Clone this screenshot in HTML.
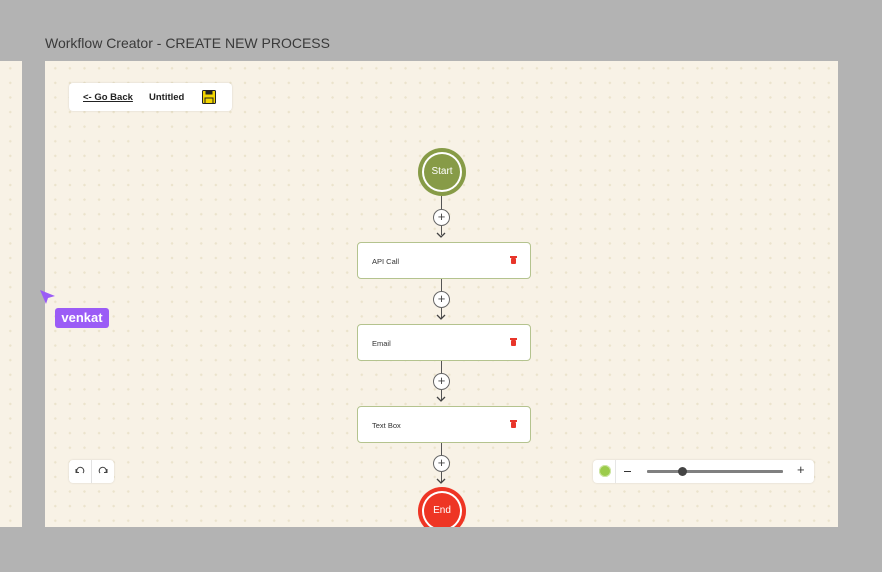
<!DOCTYPE html>
<html><head><style>
*{margin:0;padding:0;box-sizing:border-box}
body{width:882px;height:572px;background:#b3b3b3;position:relative;overflow:hidden;font-family:"Liberation Sans",sans-serif}
.title{position:absolute;left:45px;top:35px;font-size:14px;color:#3a3a3a}
.bg{background-color:#f8f2e6;background-image:radial-gradient(circle,#ebe3cc 1.1px,transparent 1.4px);background-size:14.6px 14.6px;background-position:3px 0px}
.strip{position:absolute;left:0;top:61px;width:22px;height:466px}
.canvas{position:absolute;left:45px;top:61px;width:793px;height:466px;overflow:hidden}
.panel{position:absolute;background:#fff;border-radius:4px;box-shadow:0 0 2px rgba(0,0,0,.12)}
.line{position:absolute;left:395.5px;width:1.5px;background:#555}
.plus{position:absolute;left:388px;width:17px;height:17px;border:1px solid #666;border-radius:50%;background:#fff;font-size:13px;line-height:14px;text-align:center;color:#444}
.arrow{position:absolute;left:391px;width:10px;height:10px}
.box{position:absolute;left:312px;width:174px;height:37px;background:#fff;border:1px solid #b4c38e;border-radius:4px;font-size:7.5px;color:#333;padding:14px 0 0 14px}
.trash{position:absolute;right:14px;top:15px;width:5px;height:6px;background:#e8352a;border-radius:1px}
.trash:before{content:"";position:absolute;left:-1px;top:-2px;width:7px;height:1.5px;background:#e8352a}
.circ{position:absolute;left:373px;width:48px;height:48px;border-radius:50%;color:#fff;font-size:10px;text-align:center;line-height:48px}
</style></head><body>
<div class="title">Workflow Creator - CREATE NEW PROCESS</div>
<div class="strip bg"></div>
<div class="canvas bg">
 <div class="panel" style="left:24px;top:22px;width:163px;height:28px"></div>
 <div style="position:absolute;left:38px;top:31px;font-size:9.5px;font-weight:bold;color:#222;text-decoration:underline">&lt;- Go Back</div>
 <div style="position:absolute;left:104px;top:31px;font-size:9.5px;font-weight:bold;color:#222">Untitled</div>
 <svg style="position:absolute;left:157px;top:29px" width="14" height="14" viewBox="0 0 14 14"><rect x="0.5" y="0.5" width="13" height="13" rx="1" fill="#f2d500" stroke="#222"/><rect x="3.5" y="0.5" width="7" height="4" fill="#222"/><rect x="3" y="8" width="8" height="5.5" fill="#f2d500" stroke="#222"/></svg>

 <div class="line" style="top:134px;height:40px"></div>
 <div class="line" style="top:190px;height:30px"></div>
 <div class="line" style="top:218px;height:40px"></div>
 <div class="line" style="top:300px;height:40px"></div>
 <div class="line" style="top:382px;height:40px"></div>
 <div class="circ" style="top:87px;background:#879b47;box-shadow:inset 0 0 0 4px #879b47,inset 0 0 0 6px #fff">Start</div>
 <div class="plus" style="top:148px">+</div>
 <div class="plus" style="top:230px">+</div>
 <div class="plus" style="top:312px">+</div>
 <div class="plus" style="top:394px">+</div>
 <svg class="arrow" style="top:168px" viewBox="0 0 10 10"><path d="M1 4l4 4 4-4" fill="none" stroke="#444" stroke-width="1.3"/></svg>
 <svg class="arrow" style="top:250px" viewBox="0 0 10 10"><path d="M1 4l4 4 4-4" fill="none" stroke="#444" stroke-width="1.3"/></svg>
 <svg class="arrow" style="top:332px" viewBox="0 0 10 10"><path d="M1 4l4 4 4-4" fill="none" stroke="#444" stroke-width="1.3"/></svg>
 <svg class="arrow" style="top:414px" viewBox="0 0 10 10"><path d="M1 4l4 4 4-4" fill="none" stroke="#444" stroke-width="1.3"/></svg>
 <div class="box" style="top:181px">API Call<div class="trash"></div></div>
 <div class="box" style="top:263px">Email<div class="trash"></div></div>
 <div class="box" style="top:345px">Text Box<div class="trash"></div></div>
 <div class="circ" style="top:426px;background:#ee3524;box-shadow:inset 0 0 0 4px #ee3524,inset 0 0 0 6px #fff">End</div>

 <div class="panel" style="left:24px;top:399px;width:45px;height:23px"></div>
 <div style="position:absolute;left:46px;top:399px;width:1px;height:23px;background:#e2e2e2"></div>
 <svg style="position:absolute;left:30px;top:405px" width="10" height="10" viewBox="0 0 10 10"><path d="M2 6A3.5 3.5 0 1 1 8 7" fill="none" stroke="#444" stroke-width="1"/><path d="M1 3v3.5h3" fill="none" stroke="#444" stroke-width="1"/></svg>
 <svg style="position:absolute;left:53px;top:405px" width="10" height="10" viewBox="0 0 10 10"><path d="M8 6A3.5 3.5 0 1 0 2 7" fill="none" stroke="#444" stroke-width="1"/><path d="M9 3v3.5h-3" fill="none" stroke="#444" stroke-width="1"/></svg>

 <div class="panel" style="left:548px;top:399px;width:221px;height:23px"></div>
 <div style="position:absolute;left:570px;top:399px;width:1px;height:23px;background:#e6e6e6"></div>
 <div style="position:absolute;left:554px;top:404px;width:12px;height:12px;border-radius:50%;background:#9bcb4a;box-shadow:0 0 0 1px #cfe6a6 inset"></div>
 <div style="position:absolute;left:579px;top:410px;width:7px;height:1.2px;background:#333"></div>
 <div style="position:absolute;left:602px;top:409px;width:136px;height:2.5px;background:#808080;border-radius:1px"></div>
 <div style="position:absolute;left:633px;top:406px;width:9px;height:9px;border-radius:50%;background:#444"></div>
 <div style="position:absolute;left:752px;top:401px;font-size:13px;color:#333">+</div>
</div>
<svg style="position:absolute;left:39px;top:289px" width="18" height="16" viewBox="0 0 18 16"><path d="M1 1L16 7L9 9L7 15Z" fill="#9b5cf6"/></svg>
<div style="position:absolute;left:55px;top:308px;width:54px;height:20px;background:#9b5cf6;border-radius:3px;color:#fff;font-weight:bold;font-size:13px;line-height:20px;text-align:center">venkat</div>
</body></html>
